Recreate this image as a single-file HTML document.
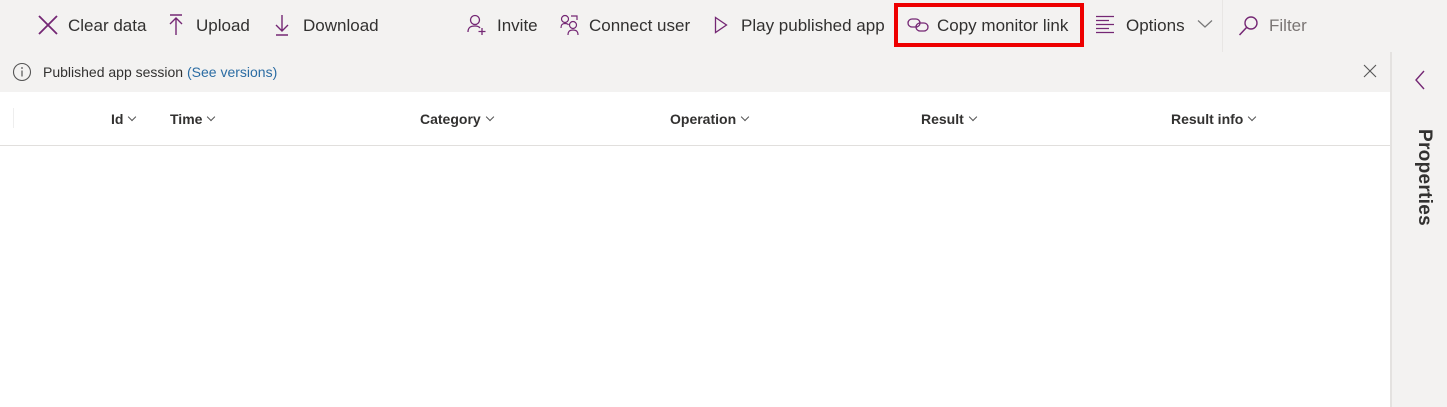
<!DOCTYPE html>
<html><head><style>
body{margin:0;width:1447px;height:407px;overflow:hidden;background:#fff;font-family:"Liberation Sans",sans-serif;color:#323130;position:relative}
.a{position:absolute;white-space:nowrap}
.tb{position:absolute;left:0;top:0;width:1447px;height:52px;background:#f3f2f1;box-shadow:0 1px 3px rgba(0,0,0,.08)}
.t{font-size:17px;top:16px}
svg{position:absolute}
.h{font-size:14px;font-weight:bold;top:111px;color:#323130}
.h:after{content:"";display:inline-block;width:5px;height:5px;border-right:1.3px solid #555;border-bottom:1.3px solid #555;transform:rotate(45deg);margin-left:6px;position:relative;top:-4px}
</style></head><body>
<div class="tb"></div>
<svg style="left:38px;top:15px" width="20" height="20" viewBox="0 0 20 20"><path d="M1 1L19 19M19 1L1 19" stroke="#742774" stroke-width="1.8"/></svg>
<div class="a t" style="left:68px">Clear data</div>
<svg style="left:168px;top:14px" width="16" height="22" viewBox="0 0 16 22"><path d="M2 1H14M8 4V21M2 10L8 4L14 10" stroke="#742774" stroke-width="1.4" fill="none"/></svg>
<div class="a t" style="left:196px">Upload</div>
<svg style="left:274px;top:14px" width="16" height="22" viewBox="0 0 16 22"><path d="M2 21H14M8 1V17M2 11L8 17L14 11" stroke="#742774" stroke-width="1.4" fill="none"/></svg>
<div class="a t" style="left:303px">Download</div>
<svg style="left:467px;top:14px" width="20" height="22" viewBox="0 0 20 22"><circle cx="8" cy="6" r="4.5" stroke="#742774" stroke-width="1.3" fill="none"/><path d="M1 18C1 13 4 12 8 12C10 12 12 12.5 13 14M15 14V21M11.5 17.5H18.5" stroke="#742774" stroke-width="1.3" fill="none"/></svg>
<div class="a t" style="left:497px">Invite</div>
<svg style="left:560px;top:14px" width="20" height="22" viewBox="0 0 20 22"><circle cx="5" cy="5" r="3.5" stroke="#742774" stroke-width="1.2" fill="none"/><path d="M1 14C1 10 3 9.5 5 9.5S8 10 8.5 11M11 2H17V6" stroke="#742774" stroke-width="1.2" fill="none"/><circle cx="13" cy="11" r="3.5" stroke="#742774" stroke-width="1.2" fill="none"/><path d="M8 21C8 17 10 16 13 16S18 17 18 21" stroke="#742774" stroke-width="1.2" fill="none"/></svg>
<div class="a t" style="left:589px">Connect user</div>
<svg style="left:714px;top:16px" width="14" height="18" viewBox="0 0 14 18"><path d="M1.5 1.5L12.5 9L1.5 16.5Z" stroke="#742774" stroke-width="1.3" fill="none"/></svg>
<div class="a t" style="left:741px">Play published app</div>
<div class="a" style="left:894px;top:3px;width:190px;height:44px;border:4px solid #e00;box-sizing:border-box"></div>
<svg style="left:907px;top:17px" width="22" height="16" viewBox="0 0 22 16"><rect x="1" y="2" width="12" height="8" rx="4" stroke="#742774" stroke-width="1.3" fill="none"/><rect x="9" y="6" width="12" height="8" rx="4" stroke="#742774" stroke-width="1.3" fill="none"/></svg>
<div class="a t" style="left:937px">Copy monitor link</div>
<svg style="left:1095px;top:15px" width="20" height="20" viewBox="0 0 20 20"><path d="M1 1.5H19M1 5.5H14M1 9.5H19M1 13.5H14M1 17.5H19" stroke="#742774" stroke-width="1.2"/></svg>
<div class="a t" style="left:1126px">Options</div>
<svg style="left:1197px;top:19px" width="16" height="10" viewBox="0 0 16 10"><path d="M1 1.5L8 8L15 1.5" stroke="#777" stroke-width="1.2" fill="none"/></svg>
<div class="a" style="left:1222px;top:0;width:1px;height:52px;background:#e8e6e4"></div>
<svg style="left:1238px;top:15px" width="22" height="22" viewBox="0 0 22 22"><circle cx="13" cy="8" r="6" stroke="#742774" stroke-width="1.4" fill="none"/><path d="M9 12L1.5 20" stroke="#742774" stroke-width="1.5"/></svg>
<div class="a t" style="left:1269px;color:#7a7574">Filter</div>
<div class="a" style="left:0;top:52px;width:1390px;height:40px;background:#f3f2f1"></div>
<svg style="left:12px;top:62px" width="20" height="20" viewBox="0 0 20 20"><circle cx="10" cy="10" r="8.5" stroke="#555" stroke-width="1.1" fill="none"/><path d="M10 8.5V14.5" stroke="#555" stroke-width="1.2"/><circle cx="10" cy="6" r=".9" fill="#555"/></svg>
<div class="a" style="left:43px;top:64px;font-size:14px">Published app session <span style="color:#2b6ca3">(See versions)</span></div>
<svg style="left:1363px;top:64px" width="14" height="14" viewBox="0 0 14 14"><path d="M1 1L13 13M13 1L1 13" stroke="#555" stroke-width="1.1"/></svg>
<div class="a" style="left:1390px;top:52px;width:57px;height:355px;background:#f3f2f1;border-left:2px solid #e4e2e0"></div>
<svg style="left:1414px;top:70px" width="12" height="20" viewBox="0 0 12 20"><path d="M10 1L2 10L10 19" stroke="#742774" stroke-width="1.4" fill="none"/></svg>
<div class="a" style="left:1408px;top:129px;font-size:19px;font-weight:bold;letter-spacing:0.3px;color:#323130;transform-origin:0 0;transform:rotate(90deg) translateY(-27px);">Properties</div>
<div class="a" style="left:13px;top:108px;width:1px;height:20px;background:#eee"></div>
<div class="a h" style="left:111px">Id</div>
<div class="a h" style="left:170px">Time</div>
<div class="a h" style="left:420px">Category</div>
<div class="a h" style="left:670px">Operation</div>
<div class="a h" style="left:921px">Result</div>
<div class="a h" style="left:1171px">Result info</div>
<div class="a" style="left:0;top:145px;width:1390px;height:1px;background:#e1dfdd"></div>
</body></html>
